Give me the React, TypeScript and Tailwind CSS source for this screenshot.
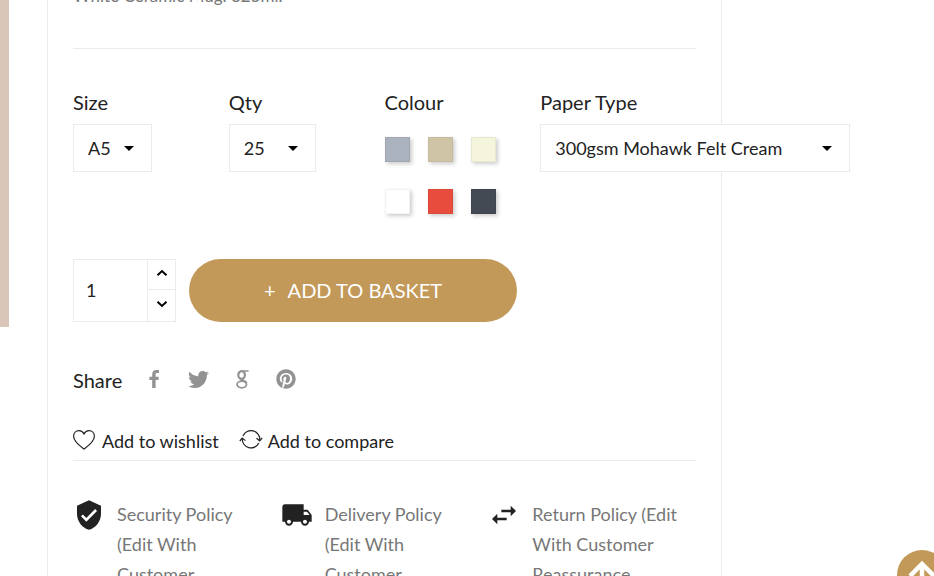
import { useState, type ReactNode } from 'react';
import clsx from 'clsx';
import { FaPinterest, FaTwitter } from 'react-icons/fa';
import { MdLocalShipping, MdSwapHoriz, MdVerifiedUser } from 'react-icons/md';

const swatches = [
  { name: 'Grey', className: 'bg-[#aab2bd]' },
  { name: 'Taupe', className: 'bg-[#cfc4a6]' },
  { name: 'Beige', className: 'bg-[#f5f5dc]' },
  { name: 'White', className: 'bg-white' },
  { name: 'Red', className: 'bg-[#e84c3d]' },
  { name: 'Black', className: 'bg-[#434a54]' },
];

const policies = [
  { icon: MdVerifiedUser, text: 'Security Policy (Edit With Customer Reassurance Module)' },
  { icon: MdLocalShipping, text: 'Delivery Policy (Edit With Customer Reassurance Module)' },
  { icon: MdSwapHoriz, text: 'Return Policy (Edit With Customer Reassurance Module)' },
];

function Select({
  id,
  label,
  options,
  className,
}: {
  id: string;
  label: string;
  options: string[];
  className: string;
}) {
  return (
    <div>
      <label htmlFor={id} className="block text-xl leading-7">
        {label}
      </label>
      <div className={clsx('relative mt-2', className)}>
        <select
          id={id}
          className="block h-12 w-full appearance-none border border-[#ebebeb] bg-white pl-3.5 pr-8 text-lg"
        >
          {options.map((option) => (
            <option key={option}>{option}</option>
          ))}
        </select>
        <svg
          viewBox="0 0 10 5"
          className="pointer-events-none absolute right-[18px] top-[22px] h-[5px] w-[10px]"
        >
          <path d="M0 0h10L5 5z" fill="#000" />
        </svg>
      </div>
    </div>
  );
}

function Chevron({ up }: { up?: boolean }) {
  return (
    <svg viewBox="0 0 12 8" className="h-2 w-3" fill="none" stroke="#000" strokeWidth="2">
      <path d={up ? 'M1.5 6.2L6 2l4.5 4.2' : 'M1.5 1.8L6 6l4.5-4.2'} />
    </svg>
  );
}

function HeartIcon() {
  return (
    <svg viewBox="0 0 24 22" className="h-[22px] w-6" fill="none" stroke="#222" strokeWidth="1.2">
      <path d="M11 19C7.700 16.500.6 11.600.6 6.200.6 2.800 3 .7 6 .7c2.200 0 4 1.200 5 3.200 1-2 2.800-3.200 5-3.200 3 0 5.400 2.100 5.400 5.500 0 5.400-7.100 10.300-10.400 12.800z" />
    </svg>
  );
}

function CompareIcon() {
  return (
    <svg viewBox="0 0 24 22" className="h-[22px] w-6" fill="none" stroke="#222" strokeWidth="1.2">
      <path d="M4 6A8.700 8.700 0 0 1 20.700 10.200M19.800 13A8.700 8.700 0 0 1 3.300 8.600" />
      <path d="M17.500 8.200l3.200 2.600 2.500-3M.8 11l2.400-2.900 3.200 2.500" />
    </svg>
  );
}

function FacebookIcon() {
  return (
    <svg viewBox="0 0 10 18" className="h-[18px] w-[10px]" fill="currentColor">
      <path d="M10 .1v3H8.200c-1.300 0-1.600.7-1.600 1.600v2h3.200L9.400 9.900H6.600V18H3.200V9.900H.4V6.700h2.800V4.300C3.200 1.500 4.900 0 7.400 0 8.600 0 9.600.1 10 .1z" />
    </svg>
  );
}

function GoogleIcon() {
  return (
    <svg viewBox="0 0 13 19" className="h-[19px] w-[13px]" fill="none" stroke="currentColor">
      <ellipse cx="5.600" cy="5" rx="3.300" ry="3.900" strokeWidth="2.200" />
      <path d="M6 1h6.600" strokeWidth="1.500" />
      <path d="M5.300 8.700C3.800 10.700 9.800 10.200 10.600 13" strokeWidth="2" />
      <ellipse cx="5.800" cy="14.500" rx="4.700" ry="3.300" strokeWidth="1.700" />
    </svg>
  );
}

function ShareLink({ label, children }: { label: string; children: ReactNode }) {
  return (
    <a href="#" aria-label={label} className="flex w-6 justify-center text-[#929292]">
      {children}
    </a>
  );
}

export default function App() {
  const [quantity, setQuantity] = useState(1);

  return (
    <div className="relative flex h-screen items-start overflow-hidden bg-white font-['Lato',sans-serif] text-[#222]">
      <div className="h-[327px] w-[9px] shrink-0 bg-[#dac6b8]" />

      <main className="ml-[38px] mr-[212px] min-w-0 flex-1 border-x border-[#ebebeb] px-[25px]">
        <p className="-mt-[18px] pb-[38px] text-[17px] leading-7 text-[#777]">
          White Ceramic Mug. 325ml.
        </p>

        <div className="grid grid-cols-4 border-t border-[#ebebeb] pt-[39px]">
          <Select id="size" label="Size" options={['A5', 'A6']} className="w-[79px]" />
          <Select id="qty" label="Qty" options={['25', '50', '100']} className="w-[87px]" />
          <fieldset>
            <legend className="text-xl leading-7">Colour</legend>
            <div className="mt-[21px] grid w-[130px] grid-cols-3 gap-y-[27px]">
              {swatches.map((swatch) => (
                <input
                  key={swatch.name}
                  type="radio"
                  name="colour"
                  aria-label={swatch.name}
                  className={clsx(
                    'block size-[25px] appearance-none border border-black/5 shadow-[2px_2px_4px_rgba(0,0,0,0.2)]',
                    swatch.className
                  )}
                />
              ))}
            </div>
          </fieldset>
          <Select
            id="paper"
            label="Paper Type"
            options={['300gsm Mohawk Felt Cream', '300gsm Mohawk Felt White']}
            className="w-[310px]"
          />
        </div>

        <div className="mt-[45px] flex gap-[13px]">
          <div className="flex h-[63px] w-[103px] border border-[#ebebeb]">
            <input
              type="text"
              aria-label="Quantity"
              value={quantity}
              onChange={(e) => setQuantity(Number(e.target.value) || 1)}
              className="w-0 flex-1 pb-0.5 pl-3 text-lg"
            />
            <div className="flex w-7 flex-col border-l border-[#ebebeb]">
              <button
                aria-label="Increase quantity"
                onClick={() => setQuantity(quantity + 1)}
                className="flex h-[30px] items-center justify-center border-b border-[#ebebeb] pb-1"
              >
                <Chevron up />
              </button>
              <button
                aria-label="Decrease quantity"
                onClick={() => setQuantity(Math.max(1, quantity - 1))}
                className="flex flex-1 items-center justify-center pb-1"
              >
                <Chevron />
              </button>
            </div>
          </div>
          <button className="flex h-[63px] items-center gap-3 rounded-full bg-[#c29958] px-[75px] pb-0.5 text-xl text-white">
            <span>+</span>
            <span>ADD TO BASKET</span>
          </button>
        </div>

        <div className="mt-11 flex h-7 items-center text-xl">
          <span>Share</span>
          <div className="ml-5 flex items-center gap-5 pb-0.5">
            <ShareLink label="Facebook">
              <FacebookIcon />
            </ShareLink>
            <ShareLink label="Twitter">
              <FaTwitter size={21} />
            </ShareLink>
            <ShareLink label="Google">
              <GoogleIcon />
            </ShareLink>
            <ShareLink label="Pinterest">
              <FaPinterest size={20} />
            </ShareLink>
          </div>
        </div>

        <div className="mt-[33px] flex gap-5 border-b border-[#ebebeb] pb-[5px] text-lg">
          <a href="#" className="flex items-center gap-[5px]">
            <HeartIcon />
            Add to wishlist
          </a>
          <a href="#" className="flex items-center gap-[5px]">
            <CompareIcon />
            Add to compare
          </a>
        </div>

        <ul className="mt-[38px] grid grid-cols-3">
          {policies.map(({ icon: Icon, text }) => (
            <li key={text} className="flex gap-3 pr-3 text-lg leading-[30px] text-[#777]">
              <Icon size={32} className="shrink-0 text-[#222]" />
              <span>{text}</span>
            </li>
          ))}
        </ul>
      </main>

      <button
        aria-label="Back to top"
        className="absolute -bottom-6 -right-[13px] flex size-[50px] items-center justify-center rounded-full bg-[#c29958]"
      >
        <svg viewBox="0 0 30 30" className="size-[30px]" fill="none" stroke="#fff" strokeWidth="4.500">
          <path d="M15 28V4M3 16L15 4l12 12" />
        </svg>
      </button>
    </div>
  );
}
